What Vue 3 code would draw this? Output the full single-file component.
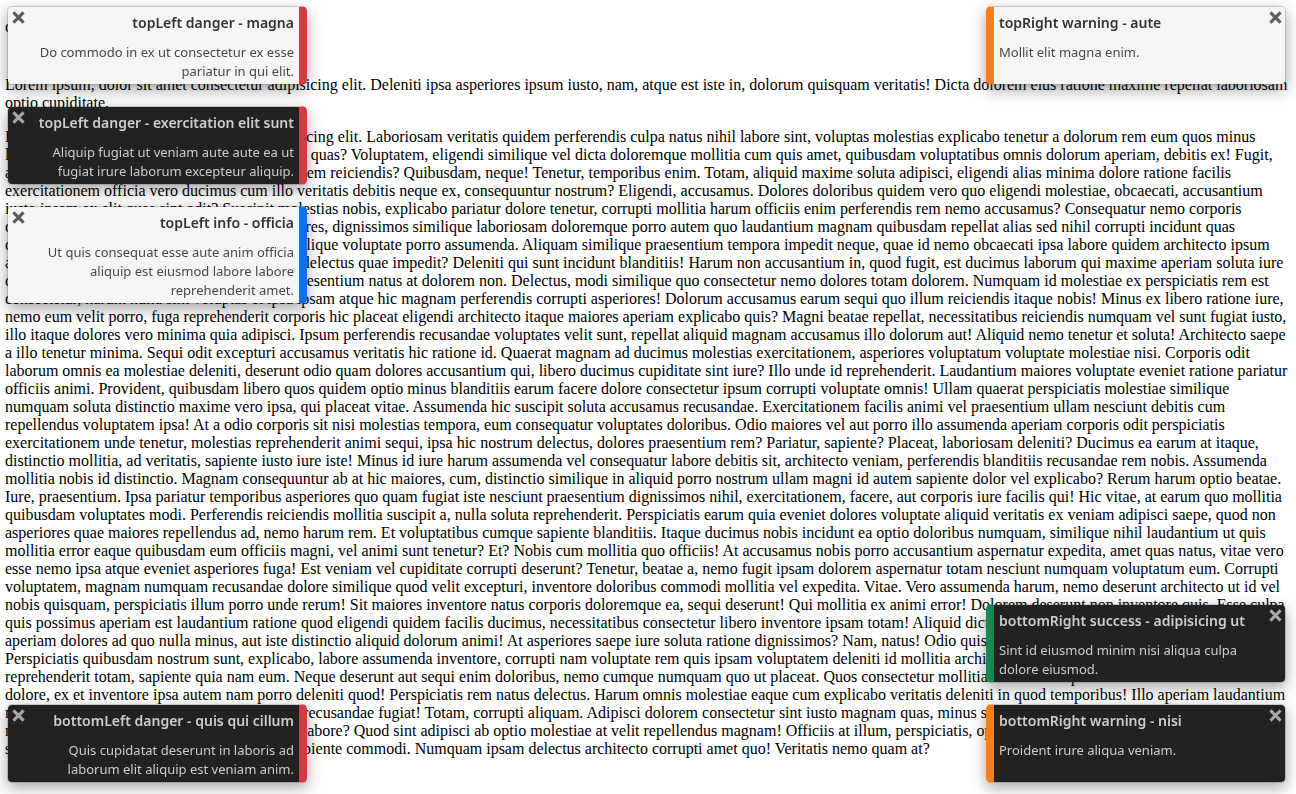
<script setup>
const lead = 'optio dolorum'

const intro = `Lorem ipsum, dolor sit amet consectetur adipisicing elit. Deleniti ipsa asperiores ipsum iusto, nam, atque est iste in, dolorum quisquam veritatis! Dicta dolorem eius ratione maxime repellat laboriosam
optio cupiditate.`

const article = `Lorem ipsum dolor sit amet consectetur adipisicing elit. Laboriosam veritatis quidem perferendis culpa natus nihil labore sint, voluptas molestias explicabo tenetur a dolorum rem eum quos minus
laborum temporibus modi eveniet dolore totam quas? Voluptatem, eligendi similique vel dicta doloremque mollitia cum quis amet, quibusdam voluptatibus omnis dolorum aperiam, debitis ex! Fugit,
aliquid sunt id ipsum quaerat possimus autem rem reiciendis? Quibusdam, neque! Tenetur, temporibus enim. Totam, aliquid maxime soluta adipisci, eligendi alias minima dolore ratione facilis
exercitationem officia vero ducimus cum illo veritatis debitis neque ex, consequuntur nostrum? Eligendi, accusamus. Dolores doloribus quidem vero quo eligendi molestiae, obcaecati, accusantium
iusto ipsam ex elit quas sint odit? Suscipit molestias nobis, explicabo pariatur dolore tenetur, corrupti mollitia harum officiis enim perferendis rem nemo accusamus? Consequatur nemo corporis
officia quam nemo minus error eveniet at maiores, dignissimos similique laboriosam doloremque porro autem quo laudantium magnam quibusdam repellat alias sed nihil corrupti incidunt quas
odio vero ducimus nesciunt totam minima similique voluptate porro assumenda. Aliquam similique praesentium tempora impedit neque, quae id nemo obcaecati ipsa labore quidem architecto ipsum
aperiam. Dolores nam vel quod numquam aut delectus quae impedit? Deleniti qui sunt incidunt blanditiis! Harum non accusantium in, quod fugit, est ducimus laborum qui maxime aperiam soluta iure
consequatur ea sed modi facere sit laborum praesentium natus at dolorem non. Delectus, modi similique quo consectetur nemo dolores totam dolorem. Numquam id molestiae ex perspiciatis rem est
consectetur, harum nulla sint voluptas et ipsa ipsam atque hic magnam perferendis corrupti asperiores! Dolorum accusamus earum sequi quo illum reiciendis itaque nobis! Minus ex libero ratione iure,
nemo eum velit porro, fuga reprehenderit corporis hic placeat eligendi architecto itaque maiores aperiam explicabo quis? Magni beatae repellat, necessitatibus reiciendis numquam vel sunt fugiat iusto,
illo itaque dolores vero minima quia adipisci. Ipsum perferendis recusandae voluptates velit sunt, repellat aliquid magnam accusamus illo dolorum aut! Aliquid nemo tenetur et soluta! Architecto saepe
a illo tenetur minima. Sequi odit excepturi accusamus veritatis hic ratione id. Quaerat magnam ad ducimus molestias exercitationem, asperiores voluptatum voluptate molestiae nisi. Corporis odit
laborum omnis ea molestiae deleniti, deserunt odio quam dolores accusantium qui, libero ducimus cupiditate sint iure? Illo unde id reprehenderit. Laudantium maiores voluptate eveniet ratione pariatur
officiis animi. Provident, quibusdam libero quos quidem optio minus blanditiis earum facere dolore consectetur ipsum corrupti voluptate omnis! Ullam quaerat perspiciatis molestiae similique
numquam soluta distinctio maxime vero ipsa, qui placeat vitae. Assumenda hic suscipit soluta accusamus recusandae. Exercitationem facilis animi vel praesentium ullam nesciunt debitis cum
repellendus voluptatem ipsa! At a odio corporis sit nisi molestias tempora, eum consequatur voluptates doloribus. Odio maiores vel aut porro illo assumenda aperiam corporis odit perspiciatis
exercitationem unde tenetur, molestias reprehenderit animi sequi, ipsa hic nostrum delectus, dolores praesentium rem? Pariatur, sapiente? Placeat, laboriosam deleniti? Ducimus ea earum at itaque,
distinctio mollitia, ad veritatis, sapiente iusto iure iste! Minus id iure harum assumenda vel consequatur labore debitis sit, architecto veniam, perferendis blanditiis recusandae rem nobis. Assumenda
mollitia nobis id distinctio. Magnam consequuntur ab at hic maiores, cum, distinctio similique in aliquid porro nostrum ullam magni id autem sapiente dolor vel explicabo? Rerum harum optio beatae.
Iure, praesentium. Ipsa pariatur temporibus asperiores quo quam fugiat iste nesciunt praesentium dignissimos nihil, exercitationem, facere, aut corporis iure facilis qui! Hic vitae, at earum quo mollitia
quibusdam voluptates modi. Perferendis reiciendis mollitia suscipit a, nulla soluta reprehenderit. Perspiciatis earum quia eveniet dolores voluptate aliquid veritatis ex veniam adipisci saepe, quod non
asperiores quae maiores repellendus ad, nemo harum rem. Et voluptatibus cumque sapiente blanditiis. Itaque ducimus nobis incidunt ea optio doloribus numquam, similique nihil laudantium ut quis
mollitia error eaque quibusdam eum officiis magni, vel animi sunt tenetur? Et? Nobis cum mollitia quo officiis! At accusamus nobis porro accusantium aspernatur expedita, amet quas natus, vitae vero
esse nemo ipsa atque eveniet asperiores fuga! Est veniam vel cupiditate corrupti deserunt? Tenetur, beatae a, nemo fugit ipsam dolorem aspernatur totam nesciunt numquam voluptatum eum. Corrupti
voluptatem, magnam numquam recusandae dolore similique quod velit excepturi, inventore doloribus commodi mollitia vel expedita. Vitae. Vero assumenda harum, nemo deserunt architecto ut id vel
nobis quisquam, perspiciatis illum porro unde rerum! Sit maiores inventore natus corporis doloremque ea, sequi deserunt! Qui mollitia ex animi error! Dolorem deserunt non inventore quis. Esse culpa
quis possimus aperiam est laudantium ratione quod eligendi quidem facilis ducimus, necessitatibus consectetur libero inventore ipsam totam! Aliquid dicta nemo ipsa, error quidem odit
aperiam dolores ad quo nulla minus, aut iste distinctio aliquid dolorum animi! At asperiores saepe iure soluta ratione dignissimos? Nam, natus! Odio quis nobis quidem fugit harum
Perspiciatis quibusdam nostrum sunt, explicabo, labore assumenda inventore, corrupti nam voluptate rem quis ipsam voluptatem deleniti id mollitia architecto natus eum sint
reprehenderit totam, sapiente quia nam eum. Neque deserunt aut sequi enim doloribus, nemo cumque numquam quo ut placeat. Quos consectetur mollitia nemo error quia
dolore, ex et inventore ipsa autem nam porro deleniti quod! Perspiciatis rem natus delectus. Harum omnis molestiae eaque cum explicabo veritatis deleniti in quod temporibus! Illo aperiam laudantium
reprehenderit at natus vel dolore eveniet modi recusandae fugiat! Totam, corrupti aliquam. Adipisci dolorem consectetur sint iusto magnam quas, minus suscipit natus illo
nemo quisquam repellat sunt dolores voluptas labore? Quod sint adipisci ab optio molestiae at velit repellendus magnam! Officiis at illum, perspiciatis, optio dolorum
similique error eveniet quae ad totam rerum sapiente commodi. Numquam ipsam delectus architecto corrupti amet quo! Veritatis nemo quam at?`

const stacks = [
  {
    place: 'top left',
    toasts: [
      { theme: 'light', kind: 'danger', title: 'topLeft danger - magna', body: 'Do commodo in ex ut consectetur ex esse pariatur in qui elit.' },
      { theme: 'dark', kind: 'danger', title: 'topLeft danger - exercitation elit sunt', body: 'Aliquip fugiat ut veniam aute aute ea ut fugiat irure laborum excepteur aliquip.' },
      { theme: 'light', kind: 'info', title: 'topLeft info - officia', body: 'Ut quis consequat esse aute anim officia aliquip est eiusmod labore labore reprehenderit amet.' },
    ],
  },
  {
    place: 'top right',
    toasts: [
      { theme: 'light', kind: 'warning', title: 'topRight warning - aute', body: 'Mollit elit magna enim.' },
    ],
  },
  {
    place: 'bottom left',
    toasts: [
      { theme: 'dark', kind: 'danger', title: 'bottomLeft danger - quis qui cillum', body: 'Quis cupidatat deserunt in laboris ad laborum elit aliquip est veniam anim.' },
    ],
  },
  {
    place: 'bottom right',
    toasts: [
      { theme: 'dark', kind: 'success', title: 'bottomRight success - adipisicing ut', body: 'Sint id eiusmod minim nisi aliqua culpa dolore eiusmod.' },
      { theme: 'dark', kind: 'warning', title: 'bottomRight warning - nisi', body: 'Proident irure aliqua veniam.' },
    ],
  },
]
</script>

<template>
  <main class="page">
    <p class="lead">{{ lead }}</p>
    <p class="intro">{{ intro }}</p>
    <p class="article">{{ article }}</p>
  </main>

  <section v-for="stack in stacks" :key="stack.place" class="stack" :class="stack.place" :aria-label="stack.place">
    <article v-for="toast in stack.toasts" :key="toast.title" class="toast" :class="[toast.theme, toast.kind]" role="status">
      <button class="close" type="button" aria-label="Close">
        <svg viewBox="0 0 12 12" aria-hidden="true"><path d="M1.3 1.3 10.7 10.7M10.7 1.3 1.3 10.7" /></svg>
      </button>
      <h2>{{ toast.title }}</h2>
      <p>{{ toast.body }}</p>
    </article>
  </section>
</template>

<style>
body {
  background: #fff;
  overflow: hidden;
}
</style>

<style scoped>
.page {
  padding: 18px 5px;
  color: #000;
  font: 16px/18px "Liberation Serif", "Times New Roman", serif;
}
.lead,
.intro,
.article {
  margin: 0;
  white-space: pre-line;
}
.intro {
  margin-top: 40px;
}
.article {
  margin-top: 16px;
}
.stack {
  position: fixed;
  display: flex;
  flex-direction: column;
  gap: 21px;
  width: 300px;
}
.top {
  top: 6px;
}
.bottom {
  bottom: 11px;
}
.left {
  left: 7px;
}
.right {
  right: 10px;
}
.toast {
  position: relative;
  box-sizing: border-box;
  min-height: 79px;
  padding: 6px 5px 3px;
  border: 1px solid rgba(0, 0, 0, 0.15);
  border-radius: 5px;
  background-clip: padding-box;
  box-shadow: 0 5px 15px rgba(0, 0, 0, 0.35);
  font-family: "Noto Sans", "Open Sans", sans-serif;
}
.left .toast {
  border-right: 8px solid var(--accent);
  text-align: right;
}
.right .toast {
  border-left: 8px solid var(--accent);
}
.light {
  background-color: #f5f5f5;
  color: #333;
}
.dark {
  background-color: #222;
  color: #ccc;
}
.danger {
  --accent: #dc3545;
}
.info {
  --accent: #0d6efd;
}
.warning {
  --accent: #fd7e14;
}
.success {
  --accent: #198754;
}
.toast h2 {
  margin: 0 0 10px;
  font-size: 14px;
  font-weight: 600;
  line-height: 20px;
}
.toast p {
  margin: 0;
  font-size: 13px;
  line-height: 19px;
}
.light p {
  color: #484848;
}
.left p {
  padding-left: 20px;
}
.right p {
  padding-right: 20px;
}
.close {
  position: absolute;
  top: 4px;
  width: 13px;
  height: 13px;
  padding: 0;
  border: 0;
  background: none;
  color: #5c5c5c;
}
.dark .close {
  color: #a8a8a8;
}
.left .close {
  left: 4px;
}
.right .close {
  right: 3px;
}
.close svg {
  display: block;
  width: 100%;
  fill: none;
  stroke: currentColor;
  stroke-width: 2.8;
}
</style>
